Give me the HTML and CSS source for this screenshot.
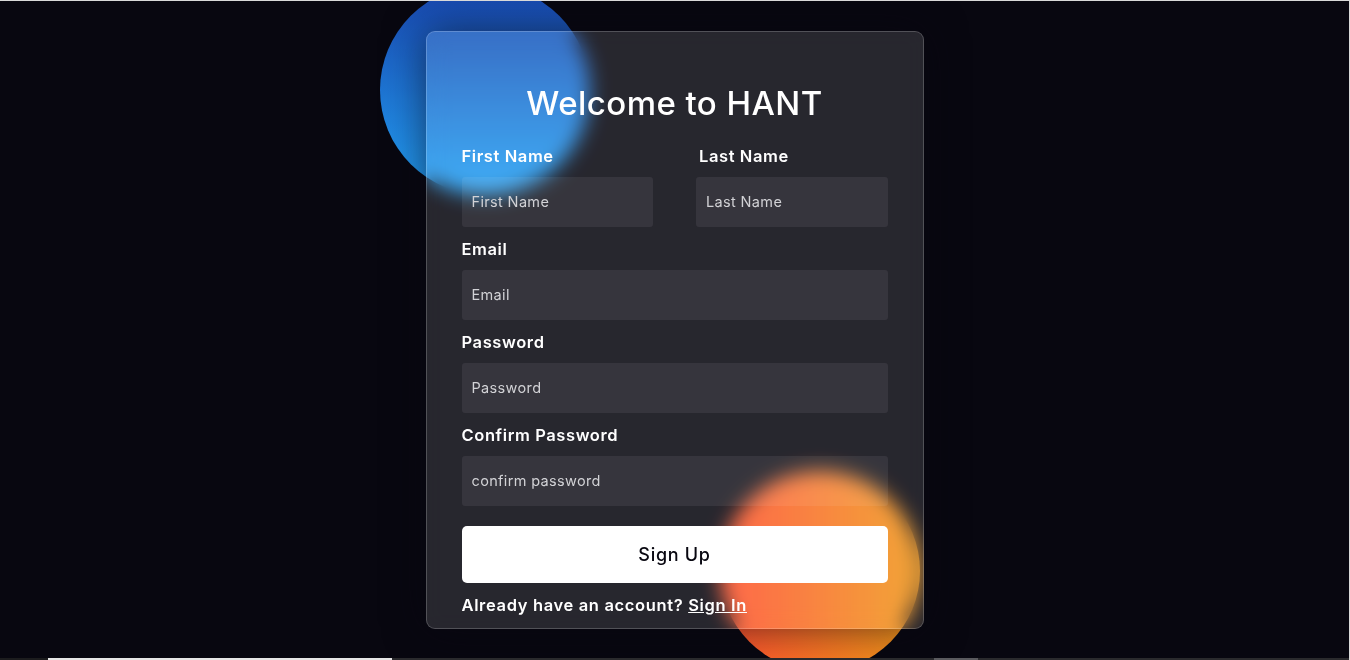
FILE: index.html
```html
<!DOCTYPE html>
<html lang="en">
<head>
<meta charset="utf-8">
<title>Welcome to HANT</title>
<link rel="stylesheet" href="styles.css">
</head>
<body>
<div class="page">
  <div class="stage">
    <div class="shape shape-blue"></div>
    <div class="shape shape-orange"></div>
    <form class="card">
      <h3 class="title">Welcome to HANT</h3>
      <div class="row">
        <div class="field">
          <label class="label" for="fn">First Name</label>
          <input class="input" id="fn" type="text" placeholder="First Name">
        </div>
        <div class="field">
          <label class="label label-offset" for="ln">Last Name</label>
          <input class="input" id="ln" type="text" placeholder="Last Name">
        </div>
      </div>
      <div class="field">
        <label class="label" for="em">Email</label>
        <input class="input" id="em" type="text" placeholder="Email">
      </div>
      <div class="field">
        <label class="label" for="pw">Password</label>
        <input class="input" id="pw" type="password" placeholder="Password">
      </div>
      <div class="field">
        <label class="label" for="cpw">Confirm Password</label>
        <input class="input" id="cpw" type="password" placeholder="confirm password">
      </div>
      <button class="button" type="button">Sign Up</button>
      <p class="footer-text">Already have an account? <a class="link" href="#">Sign In</a></p>
    </form>
  </div>
  <div class="spacer"></div>
  <div class="strip">
    <span class="strip-a"></span>
    <span class="strip-b"></span>
    <span class="strip-c"></span>
    <span class="strip-d"></span>
    <span class="strip-e"></span>
  </div>
</div>
</body>
</html>
```
FILE: styles.css
```css
* { box-sizing: border-box; }
html, body {
  margin: 0;
  padding: 0;
  background: #080710;
  font-family: "Inter", "Open Sans", "Liberation Sans", sans-serif;
}
.page {
  height: 660px;
  overflow: hidden;
  display: flex;
  flex-direction: column;
  border-top: 1px solid #d9d9d9;
  border-right: 1px solid #d9d9d9;
}
.stage {
  position: relative;
  width: 498px;
  margin: 30px auto 0;
  flex-shrink: 0;
}
.shape {
  position: absolute;
  border-radius: 50%;
}
.shape-blue {
  width: 210px;
  height: 210px;
  left: -46px;
  top: -46px;
  background: linear-gradient(#1845ad, #23a2f6);
}
.shape-orange {
  width: 200px;
  height: 200px;
  left: 294px;
  top: 440px;
  background: linear-gradient(to right, #ff512f, #f09819);
}
.card {
  position: relative;
  display: flex;
  flex-direction: column;
  height: 598px;
  padding: 50px 35px 11px;
  background: rgba(255, 255, 255, 0.13);
  border: 1px solid rgba(255, 255, 255, 0.2);
  border-radius: 9px;
  backdrop-filter: blur(10px);
  -webkit-backdrop-filter: blur(10px);
  box-shadow: 0 0 40px rgba(8, 7, 16, 0.6);
  margin: 0;
}
.card > * { flex-shrink: 0; }
.title {
  margin: 0 0 20px;
  font-size: 33px;
  line-height: 42px;
  font-weight: 500;
  letter-spacing: 0.45px;
  color: #ffffff;
  text-align: center;
}
.row {
  display: flex;
  gap: 43px;
}
.row .field { flex: 1; }
.field {
  display: flex;
  flex-direction: column;
  margin-bottom: 10px;
}
.label {
  font-size: 16.5px;
  line-height: 24px;
  font-weight: 600;
  letter-spacing: 0.6px;
  color: #ffffff;
  margin-bottom: 9px;
}
.label-offset { padding-left: 3px; }
.input {
  height: 50px;
  width: 100%;
  border: none;
  outline: none;
  border-radius: 3px;
  padding: 0 10px 2px;
  background: rgba(255, 255, 255, 0.07);
  font-family: inherit;
  font-size: 14.5px;
  font-weight: 400;
  letter-spacing: 0.35px;
  color: #e5e5e5;
}
.input::placeholder { color: #d2d2d6; }
.button {
  margin-top: 10px;
  height: 57px;
  width: 100%;
  border: none;
  border-radius: 5px;
  background: #ffffff;
  color: #080710;
  font-family: inherit;
  font-size: 18px;
  font-weight: 500;
  letter-spacing: 0.7px;
}
.footer-text {
  margin: 10px 0 0;
  font-size: 16.5px;
  line-height: 24px;
  font-weight: 600;
  letter-spacing: 0.65px;
  color: #ffffff;
}
.link {
  color: #ffffff;
  text-decoration: underline;
}
.spacer { flex: 1; }
.strip {
  position: relative;
  display: flex;
  height: 2px;
  flex-shrink: 0;
  background: #2a2a2d;
}
.strip-a { width: 48px; background: #1c1c1e; }
.strip-b { width: 344px; background: #e6e6e6; }
.strip-c { width: 542px; background: #2a2a2d; }
.strip-d { width: 44px; background: #5a5a5e; }
.strip-e { flex: 1; background: #2a2a2d; }
```
